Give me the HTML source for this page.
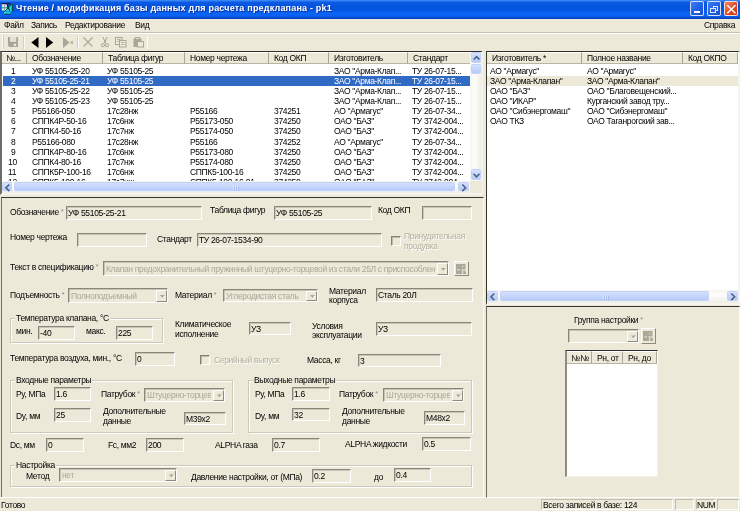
<!DOCTYPE html><html><head><meta charset="utf-8"><style>
html,body{margin:0;padding:0}
body{width:740px;height:511px;overflow:hidden;background:#ECE9D8;position:relative;font-family:"Liberation Sans",sans-serif;font-size:8.5px;color:#000}
div,svg{position:absolute}
.t{white-space:nowrap;line-height:10px;letter-spacing:-0.33px;will-change:transform}
.title{left:0;top:0;width:740px;height:19px;background:linear-gradient(#4591f8 0,#2a78f0 1px,#0b5ae6 2.5px,#0453dc 6px,#0556e0 10px,#0a64f4 13px,#0a63f3 16px,#0a4fd2 17.5px,#0940b8 19px)}
.cb{top:1px;width:14px;height:15px;box-sizing:border-box;border:1px solid rgba(255,255,255,.8);border-radius:2px;background:linear-gradient(135deg,#3c7df7,#1f5ce3 60%,#1b4fd0)}
.cl{background:linear-gradient(135deg,#ee8c6b,#e0461f 60%,#cc3a12)}
.inp{box-sizing:border-box;border-top:1px solid #8a877a;border-left:1px solid #8a877a;border-bottom:1px solid #fff;border-right:1px solid #fff;background:#ECE9D8;box-shadow:inset 1px 1px 0 #c9c6b6}
.ddb{box-sizing:border-box;background:#ECE9D8;border-top:1px solid #fff;border-left:1px solid #fff;border-right:1px solid #8e8b7c;border-bottom:1px solid #8e8b7c}
.grp{box-sizing:border-box;border:1px solid #cdc9b8;box-shadow:inset 1px 1px 0 #fff,1px 1px 0 #fff}
.chk{width:10px;height:10px;box-sizing:border-box;border-top:1px solid #858273;border-left:1px solid #858273;border-right:1px solid #fff;border-bottom:1px solid #fff;box-shadow:inset 1px 1px 0 #bdbaab}
.lv{box-sizing:border-box;background:#fff;border-top:1px solid #2e2d29;border-left:1px solid #34332e;border-right:1px solid #e0ddd0;border-bottom:1px solid #e0ddd0}
.hd{box-sizing:border-box;background:#ECE9D8;border-top:1px solid #fff;border-right:1px solid #a9a697;border-bottom:1px solid #b8b5a5;box-shadow:1px 0 0 #fff}
.sbv{background:linear-gradient(90deg,#f6f5f0,#fdfdfb 40%,#eeede6)}
.sbh{background:linear-gradient(#f6f5f0,#fdfdfb 40%,#eeede6)}
.sbtn{box-sizing:border-box;background:linear-gradient(#d4e0fd,#c3d4fb 60%,#b7cbf7);border:1px solid #c0d0f6;border-radius:1.5px}
.pnl{box-sizing:border-box;border-top:1px solid #35342f;border-left:1px solid #6f6d64;border-right:1px solid #fbfaf5;border-bottom:1px solid #fff}
.btn{box-sizing:border-box;border-top:1px solid #fff;border-left:1px solid #fff;border-right:1px solid #8e8b7c;border-bottom:1px solid #8e8b7c;background:#ECE9D8}
.sp{box-sizing:border-box;border-top:1px solid #c0bdae;border-left:1px solid #c0bdae;border-right:1px solid #fff;border-bottom:1px solid #fff}
</style></head><body>
<div class="title"></div>
<svg style="position:absolute;left:0px;top:1px" width="16" height="16" viewBox="0 0 16 16">
<rect x="1.6" y="2" width="9" height="1.3" fill="#101c40"/>
<rect x="1.8" y="3.3" width="5.2" height="6.2" fill="#eee4e2"/>
<rect x="1.8" y="5.9" width="5.2" height="1.6" fill="#1cc2bc"/>
<rect x="4.2" y="3.3" width="0.7" height="6.2" fill="#9a8f96"/>
<path d="M11.9 2.6 L11.9 10.4 L4.6 10.4 Z" fill="#1ad8c6"/>
<path d="M11.9 2.8 L5 10.2" stroke="#0a3a36" stroke-width="0.9"/>
<path d="M6.8 3.4 L9.6 9.6" stroke="#0b1830" stroke-width="1"/>
<rect x="11.9" y="2.8" width="1" height="7.8" fill="#074236"/>
<rect x="4" y="10.9" width="6.4" height="1.9" fill="#1ad8c6"/>
<rect x="4" y="12.8" width="6.4" height="0.8" fill="#0b2a40"/>
</svg>
<div class="t" style="left:16px;top:3.2px;font-size:9px;font-weight:bold;color:#fff;letter-spacing:0.19px;text-shadow:1px 1px 0 #0a2fa0">Чтение / модификация базы данных для расчета предклапана - pk1</div>
<div class="cb" style="left:690px"><div style="position:absolute;left:3px;top:9px;width:6px;height:2px;background:#fff"></div></div>
<div class="cb" style="left:707px"><div style="left:4.5px;top:3.5px;width:5.5px;height:5px;box-sizing:border-box;border:1px solid rgba(255,255,255,.85);border-top-width:1.6px"></div><div style="left:2px;top:6px;width:5.5px;height:5px;box-sizing:border-box;border:1px solid rgba(255,255,255,.85);border-top-width:1.6px;background:#2a62e2"></div></div>
<div class="cb cl" style="left:724px"><svg width="14" height="15" style="position:absolute;left:0;top:0"><path d="M2.3 3.3 L10.4 11.2 M10.4 3.3 L2.3 11.2" stroke="#fff" stroke-width="1.5"/></svg></div>
<div class="t" style="left:4px;top:20.20px;font-size:8.5px;">Файл</div>
<div class="t" style="left:31px;top:20.20px;font-size:8.5px;">Запись</div>
<div class="t" style="left:65px;top:20.20px;font-size:8.5px;">Редактирование</div>
<div class="t" style="left:135px;top:20.20px;font-size:8.5px;">Вид</div>
<div class="t" style="left:704px;top:20.20px;font-size:8.5px;">Справка</div>
<div style="left:0px;top:32px;width:740px;height:1px;background:#c5c2b2"></div>
<div style="left:0px;top:33px;width:740px;height:1px;background:#fff"></div>
<div style="left:2px;top:35px;width:1px;height:14px;background:#fbfaf6"></div>
<div style="left:3px;top:35px;width:1px;height:14px;background:#d3d0c2"></div>
<svg style="position:absolute;left:8px;top:37px" width="11" height="11"><path d="M0 0 H10 V10 H1.5 L0 8.5 Z" fill="#a9a697"/><rect x="2" y="0" width="6.2" height="4.8" fill="#e6e3d6"/><rect x="5.8" y="6.8" width="2.3" height="2.2" fill="#eeebe0"/></svg>
<div style="left:23px;top:36px;width:1px;height:13px;background:#d3d0c2"></div>
<div style="left:24px;top:36px;width:1px;height:13px;background:#fbfaf6"></div>
<svg style="position:absolute;left:31px;top:36.5px" width="24" height="12"><path d="M0.3 5.5 L7.5 0 L7.5 11 Z" fill="#000"/><path d="M15 0 L22.2 5.5 L15 11 Z" fill="#000"/></svg>
<svg style="position:absolute;left:63px;top:36.5px" width="12" height="12"><path d="M0 0 L6.5 5.5 L0 11 Z" fill="#a9a697"/><path d="M7.6 4 L10 7 M10 4 L7.6 7" stroke="#a9a697" stroke-width="1"/></svg>
<div style="left:77px;top:36px;width:1px;height:13px;background:#d3d0c2"></div>
<div style="left:78px;top:36px;width:1px;height:13px;background:#fbfaf6"></div>
<svg style="position:absolute;left:83px;top:37px" width="11" height="11"><path d="M0.5 0.5 L9.5 9.5 M9.5 0.5 L0.5 9.5" stroke="#aaa796" stroke-width="1.1"/></svg>
<svg style="position:absolute;left:101px;top:37px" width="8" height="11"><path d="M1.8 0 L4.8 6.2 M6.2 0 L3.2 6.2" stroke="#aaa796" stroke-width="1"/><circle cx="2" cy="8.2" r="1.6" fill="none" stroke="#aaa796" stroke-width="1"/><circle cx="6" cy="8.2" r="1.6" fill="none" stroke="#aaa796" stroke-width="1"/></svg>
<svg style="position:absolute;left:115px;top:37px" width="12" height="11"><rect x="0.5" y="0.5" width="6.5" height="7" fill="#ece9dc" stroke="#aaa796"/><rect x="4.5" y="3.5" width="6.5" height="6.5" fill="#ece9dc" stroke="#aaa796"/><path d="M2 2.5 H5.5 M2 4.5 H4 M6 5.5 H9.5 M6 7.5 H9.5" stroke="#aaa796" stroke-width="0.8"/></svg>
<svg style="position:absolute;left:133px;top:37px" width="11" height="11"><rect x="0.5" y="1.5" width="8" height="8.5" fill="#aaa796"/><rect x="2.5" y="0.5" width="4" height="2.2" fill="#e2dfd2" stroke="#aaa796"/><rect x="4.5" y="4.5" width="6" height="5.5" fill="#ece9dc" stroke="#aaa796"/></svg>
<div style="left:147px;top:36px;width:1px;height:13px;background:#fff"></div>
<div class="lv" style="left:0px;top:51px;width:483px;height:144px;border-left-width:2px;border-left-color:#6d6b63;border-right:2px solid #f4f3ee;border-bottom:2px solid #f4f3ee"></div>
<div class="hd" style="left:2px;top:52px;width:25px;height:12px"></div>
<div class="t" style="left:6px;top:53.00px;font-size:8.5px;">№...</div>
<div class="hd" style="left:27px;top:52px;width:76px;height:12px"></div>
<div class="t" style="left:31.5px;top:53.00px;font-size:8.5px;">Обозначение</div>
<div class="hd" style="left:103px;top:52px;width:82px;height:12px"></div>
<div class="t" style="left:107.5px;top:53.00px;font-size:8.5px;">Таблица фигур</div>
<div class="hd" style="left:185px;top:52px;width:84px;height:12px"></div>
<div class="t" style="left:189.5px;top:53.00px;font-size:8.5px;">Номер чертежа</div>
<div class="hd" style="left:269px;top:52px;width:60px;height:12px"></div>
<div class="t" style="left:273.5px;top:53.00px;font-size:8.5px;">Код ОКП</div>
<div class="hd" style="left:329px;top:52px;width:79px;height:12px"></div>
<div class="t" style="left:333.5px;top:53.00px;font-size:8.5px;">Изготовитель</div>
<div class="hd" style="left:408px;top:52px;width:63px;height:12px"></div>
<div class="t" style="left:412.5px;top:53.00px;font-size:8.5px;">Стандарт</div>
<div style="left:2px;top:64px;width:469px;height:118px;overflow:hidden">
<div class="t" style="left:9px;top:1.50px;">1</div>
<div class="t" style="left:29.8px;top:1.50px;">УФ 55105-25-20</div>
<div class="t" style="left:105.4px;top:1.50px;">УФ 55105-25</div>
<div class="t" style="left:331.8px;top:1.50px;">ЗАО "Арма-Клап...</div>
<div class="t" style="left:410.4px;top:1.50px;">ТУ 26-07-15...</div>
<div style="left:1px;top:11.76px;width:467px;height:10px;background:#316ac5"></div>
<div class="t" style="left:9px;top:11.66px;color:#fff">2</div>
<div class="t" style="left:29.8px;top:11.66px;color:#fff">УФ 55105-25-21</div>
<div class="t" style="left:105.4px;top:11.66px;color:#fff">УФ 55105-25</div>
<div class="t" style="left:331.8px;top:11.66px;color:#fff">ЗАО "Арма-Клап...</div>
<div class="t" style="left:410.4px;top:11.66px;color:#fff">ТУ 26-07-15...</div>
<div class="t" style="left:9px;top:21.82px;">3</div>
<div class="t" style="left:29.8px;top:21.82px;">УФ 55105-25-22</div>
<div class="t" style="left:105.4px;top:21.82px;">УФ 55105-25</div>
<div class="t" style="left:331.8px;top:21.82px;">ЗАО "Арма-Клап...</div>
<div class="t" style="left:410.4px;top:21.82px;">ТУ 26-07-15...</div>
<div class="t" style="left:9px;top:31.98px;">4</div>
<div class="t" style="left:29.8px;top:31.98px;">УФ 55105-25-23</div>
<div class="t" style="left:105.4px;top:31.98px;">УФ 55105-25</div>
<div class="t" style="left:331.8px;top:31.98px;">ЗАО "Арма-Клап...</div>
<div class="t" style="left:410.4px;top:31.98px;">ТУ 26-07-15...</div>
<div class="t" style="left:9px;top:42.14px;">5</div>
<div class="t" style="left:29.8px;top:42.14px;">P55166-050</div>
<div class="t" style="left:105.4px;top:42.14px;">17с28нж</div>
<div class="t" style="left:187.7px;top:42.14px;">P55166</div>
<div class="t" style="left:271.7px;top:42.14px;">374251</div>
<div class="t" style="left:331.8px;top:42.14px;">АО "Армагус"</div>
<div class="t" style="left:410.4px;top:42.14px;">ТУ 26-07-34...</div>
<div class="t" style="left:9px;top:52.30px;">6</div>
<div class="t" style="left:29.8px;top:52.30px;">СППК4Р-50-16</div>
<div class="t" style="left:105.4px;top:52.30px;">17с6нж</div>
<div class="t" style="left:187.7px;top:52.30px;">P55173-050</div>
<div class="t" style="left:271.7px;top:52.30px;">374250</div>
<div class="t" style="left:331.8px;top:52.30px;">ОАО "БАЗ"</div>
<div class="t" style="left:410.4px;top:52.30px;">ТУ 3742-004...</div>
<div class="t" style="left:9px;top:62.46px;">7</div>
<div class="t" style="left:29.8px;top:62.46px;">СППК4-50-16</div>
<div class="t" style="left:105.4px;top:62.46px;">17с7нж</div>
<div class="t" style="left:187.7px;top:62.46px;">P55174-050</div>
<div class="t" style="left:271.7px;top:62.46px;">374250</div>
<div class="t" style="left:331.8px;top:62.46px;">ОАО "БАЗ"</div>
<div class="t" style="left:410.4px;top:62.46px;">ТУ 3742-004...</div>
<div class="t" style="left:9px;top:72.62px;">8</div>
<div class="t" style="left:29.8px;top:72.62px;">P55166-080</div>
<div class="t" style="left:105.4px;top:72.62px;">17с28нж</div>
<div class="t" style="left:187.7px;top:72.62px;">P55166</div>
<div class="t" style="left:271.7px;top:72.62px;">374252</div>
<div class="t" style="left:331.8px;top:72.62px;">АО "Армагус"</div>
<div class="t" style="left:410.4px;top:72.62px;">ТУ 26-07-34...</div>
<div class="t" style="left:9px;top:82.78px;">9</div>
<div class="t" style="left:29.8px;top:82.78px;">СППК4Р-80-16</div>
<div class="t" style="left:105.4px;top:82.78px;">17с6нж</div>
<div class="t" style="left:187.7px;top:82.78px;">P55173-080</div>
<div class="t" style="left:271.7px;top:82.78px;">374250</div>
<div class="t" style="left:331.8px;top:82.78px;">ОАО "БАЗ"</div>
<div class="t" style="left:410.4px;top:82.78px;">ТУ 3742-004...</div>
<div class="t" style="left:5.5px;top:92.94px;">10</div>
<div class="t" style="left:29.8px;top:92.94px;">СППК4-80-16</div>
<div class="t" style="left:105.4px;top:92.94px;">17с7нж</div>
<div class="t" style="left:187.7px;top:92.94px;">P55174-080</div>
<div class="t" style="left:271.7px;top:92.94px;">374250</div>
<div class="t" style="left:331.8px;top:92.94px;">ОАО "БАЗ"</div>
<div class="t" style="left:410.4px;top:92.94px;">ТУ 3742-004...</div>
<div class="t" style="left:5.5px;top:103.10px;">11</div>
<div class="t" style="left:29.8px;top:103.10px;">СППК5Р-100-16</div>
<div class="t" style="left:105.4px;top:103.10px;">17с6нж</div>
<div class="t" style="left:187.7px;top:103.10px;">СППК5-100-16</div>
<div class="t" style="left:271.7px;top:103.10px;">374250</div>
<div class="t" style="left:331.8px;top:103.10px;">ОАО "БАЗ"</div>
<div class="t" style="left:410.4px;top:103.10px;">ТУ 3742-004...</div>
<div class="t" style="left:5.5px;top:113.26px;">12</div>
<div class="t" style="left:29.8px;top:113.26px;">СППК5-100-16</div>
<div class="t" style="left:105.4px;top:113.26px;">17с7нж</div>
<div class="t" style="left:187.7px;top:113.26px;">СППК5-100-16-01</div>
<div class="t" style="left:271.7px;top:113.26px;">374250</div>
<div class="t" style="left:331.8px;top:113.26px;">ОАО "БАЗ"</div>
<div class="t" style="left:410.4px;top:113.26px;">ТУ 3742-004...</div>
</div>
<div class="sbv" style="left:470px;top:52px;width:12px;height:130px"></div>
<div class="sbtn" style="left:471px;top:52px;width:10px;height:11px"><svg width="10" height="11"><path d="M1.7 6.5 L4.6 3.6 L7.5 6.5" stroke="#4d6185" stroke-width="1.6" fill="none"/></svg></div>
<div class="sbtn" style="left:471px;top:64px;width:10px;height:10px"></div>
<div class="sbtn" style="left:471px;top:169px;width:10px;height:11px"><svg width="10" height="11"><path d="M1.5 3.8 L4.5 6.8 L7.5 3.8" stroke="#4d6185" stroke-width="1.6" fill="none"/></svg></div>
<div class="sbh" style="left:2px;top:181px;width:469px;height:12px"></div>
<div class="sbtn" style="left:2px;top:182px;width:10px;height:9px;box-shadow:0 1px 0 #e6ecfb"><svg width="10" height="10"><path d="M6.3 1.5 L3 4.8 L6.3 8.1" stroke="#4d6185" stroke-width="1.6" fill="none"/></svg></div>
<div class="sbtn" style="left:14px;top:182px;width:441px;height:9px;box-shadow:0 1px 0 #e6ecfb"><svg width="441" height="10"><path d="M218.5 3 V7 M220.5 3 V7 M222.5 3 V7" stroke="#eef3fe" stroke-width="0.8"/><path d="M219.3 3.5 V7.5 M221.3 3.5 V7.5 M223.3 3.5 V7.5" stroke="#8faae6" stroke-width="0.6"/></svg></div>
<div class="sbtn" style="left:458px;top:182px;width:11px;height:9px;box-shadow:0 1px 0 #e6ecfb"><svg width="10" height="10"><path d="M3.3 1.5 L6.6 4.8 L3.3 8.1" stroke="#4d6185" stroke-width="1.6" fill="none"/></svg></div>
<div style="left:470px;top:181px;width:12px;height:12px;background:#ECE9D8"></div>
<div class="lv" style="left:486px;top:51px;width:254px;height:254px;border-right:2px solid #f4f3ee;border-bottom:2px solid #f4f3ee"></div>
<div class="hd" style="left:487px;top:52px;width:95px;height:12px"></div>
<div class="t" style="left:491.5px;top:53.00px;font-size:8.5px;">Изготовитель *</div>
<div class="hd" style="left:582px;top:52px;width:101px;height:12px"></div>
<div class="t" style="left:586.5px;top:53.00px;font-size:8.5px;">Полное название</div>
<div class="hd" style="left:683px;top:52px;width:55px;height:12px"></div>
<div class="t" style="left:687.5px;top:53.00px;font-size:8.5px;">Код ОКПО</div>
<div class="t" style="left:489.8px;top:65.70px;font-size:8.5px;">АО "Армагус"</div>
<div class="t" style="left:586.5px;top:65.70px;font-size:8.5px;">АО "Армагус"</div>
<div style="left:487px;top:76px;width:251px;height:10px;background:#ECE9D8"></div>
<div class="t" style="left:489.8px;top:75.70px;font-size:8.5px;">ЗАО "Арма-Клапан"</div>
<div class="t" style="left:586.5px;top:75.70px;font-size:8.5px;">ЗАО "Арма-Клапан"</div>
<div class="t" style="left:489.8px;top:85.70px;font-size:8.5px;">ОАО "БАЗ"</div>
<div class="t" style="left:586.5px;top:85.70px;font-size:8.5px;">ОАО "Благовещенский...</div>
<div class="t" style="left:489.8px;top:95.70px;font-size:8.5px;">ОАО "ИКАР"</div>
<div class="t" style="left:586.5px;top:95.70px;font-size:8.5px;">Курганский завод тру...</div>
<div class="t" style="left:489.8px;top:105.70px;font-size:8.5px;">ОАО "Сибэнергомаш"</div>
<div class="t" style="left:586.5px;top:105.70px;font-size:8.5px;">ОАО "Сибэнергомаш"</div>
<div class="t" style="left:489.8px;top:115.70px;font-size:8.5px;">ОАО ТКЗ</div>
<div class="t" style="left:586.5px;top:115.70px;font-size:8.5px;">ОАО Таганрогский зав...</div>
<div class="sbh" style="left:487px;top:290px;width:251px;height:13px"></div>
<div class="sbtn" style="left:487px;top:291px;width:11px;height:10px"><svg width="10" height="10"><path d="M6.3 1.5 L3 4.8 L6.3 8.1" stroke="#4d6185" stroke-width="1.6" fill="none"/></svg></div>
<div class="sbtn" style="left:500px;top:291px;width:209px;height:10px"><svg width="209" height="10"><path d="M102.5 3 V7 M104.5 3 V7 M106.5 3 V7" stroke="#eef3fe" stroke-width="0.8"/><path d="M103.3 3.5 V7.5 M105.3 3.5 V7.5 M107.3 3.5 V7.5" stroke="#8faae6" stroke-width="0.6"/></svg></div>
<div class="sbtn" style="left:727px;top:291px;width:11px;height:10px"><svg width="10" height="10"><path d="M3.3 1.5 L6.6 4.8 L3.3 8.1" stroke="#4d6185" stroke-width="1.6" fill="none"/></svg></div>
<div class="pnl" style="left:1px;top:197px;width:483px;height:301px"></div>
<div class="t" style="left:10px;top:207.10px;font-size:8.5px;">Обозначение <span style="color:#858585;font-size:7px;vertical-align:1px">*</span></div>
<div class="inp" style="left:66px;top:206px;width:136px;height:14px"></div>
<div class="t" style="left:68px;top:208.20px;font-size:8.5px;">УФ 55105-25-21</div>
<div class="t" style="left:210px;top:205.40px;font-size:8.5px;">Таблица фигур</div>
<div class="inp" style="left:274px;top:206px;width:98px;height:14px"></div>
<div class="t" style="left:276px;top:208.20px;font-size:8.5px;">УФ 55105-25</div>
<div class="t" style="left:378px;top:205.40px;font-size:8.5px;">Код ОКП</div>
<div class="inp" style="left:422px;top:206px;width:50px;height:14px"></div>
<div class="t" style="left:10px;top:232.30px;font-size:8.5px;">Номер чертежа</div>
<div class="inp" style="left:77px;top:233px;width:70px;height:14px"></div>
<div class="t" style="left:157px;top:233.50px;font-size:8.5px;">Стандарт</div>
<div class="inp" style="left:197px;top:233px;width:185px;height:14px"></div>
<div class="t" style="left:199px;top:235.20px;font-size:8.5px;">ТУ 26-07-1534-90</div>
<div class="chk" style="left:391px;top:236px"></div>
<div class="t" style="left:404px;top:230.80px;font-size:8.5px;color:#b3b0a1;text-shadow:0.7px 0.7px 0 #fff">Принудительная</div>
<div class="t" style="left:404px;top:240.60px;font-size:8.5px;color:#b3b0a1;text-shadow:0.7px 0.7px 0 #fff">продувка</div>
<div class="t" style="left:10px;top:261.70px;font-size:8.5px;">Текст в спецификацию <span style="color:#858585;font-size:7px;vertical-align:1px">*</span></div>
<div class="inp" style="left:103px;top:261px;width:346px;height:15px;box-shadow:inset 0.5px 0.5px 0 #a3a092"></div>
<div class="t" style="left:106px;top:263.70px;width:329px;overflow:hidden;color:#aca899">Клапан предохранительный пружинный штуцерно-торцевой из стали 25Л с приспособлен</div>
<div class="ddb" style="left:437px;top:263px;width:11px;height:12px"><svg width="11" height="12" style="left:-1px;top:-1px"><path d="M4 5.0 h5 l-2.5 3 z" fill="#fff" transform="translate(0.8,0.8)"/><path d="M4 5.0 h5 l-2.5 3 z" fill="#aca899"/></svg></div>
<div class="btn" style="left:454px;top:261px;width:15px;height:15px"><svg width="15" height="15" style="left:-1px;top:-1px"><rect x="2" y="3" width="10" height="10" fill="#aca897"/><path d="M3.3 8.9 H6 M7.4 8.9 H12 M8.7 9 V13 M8.7 4.8 V6.4 M12 3 V11" stroke="#f4f2ea" stroke-width="0.9" fill="none"/></svg></div>
<div class="t" style="left:10px;top:289.70px;font-size:8.5px;">Подъемность <span style="color:#858585;font-size:7px;vertical-align:1px">*</span></div>
<div class="inp" style="left:68px;top:288px;width:100px;height:15px;box-shadow:inset 0.5px 0.5px 0 #a3a092"></div>
<div class="t" style="left:71px;top:290.70px;width:83px;overflow:hidden;color:#aca899">Полноподъемный</div>
<div class="ddb" style="left:156px;top:290px;width:11px;height:12px"><svg width="11" height="12" style="left:-1px;top:-1px"><path d="M4 5.0 h5 l-2.5 3 z" fill="#fff" transform="translate(0.8,0.8)"/><path d="M4 5.0 h5 l-2.5 3 z" fill="#aca899"/></svg></div>
<div class="t" style="left:175px;top:289.70px;font-size:8.5px;">Материал <span style="color:#858585;font-size:7px;vertical-align:1px">*</span></div>
<div class="inp" style="left:223px;top:289px;width:95px;height:13px;box-shadow:inset 0.5px 0.5px 0 #a3a092"></div>
<div class="t" style="left:226px;top:290.70px;width:78px;overflow:hidden;color:#aca899">Углеродистая сталь</div>
<div class="ddb" style="left:306px;top:291px;width:11px;height:10px"><svg width="11" height="10" style="left:-1px;top:-1px"><path d="M4 4.0 h5 l-2.5 3 z" fill="#fff" transform="translate(0.8,0.8)"/><path d="M4 4.0 h5 l-2.5 3 z" fill="#aca899"/></svg></div>
<div class="t" style="left:329px;top:285.65px;font-size:8.5px;">Материал</div>
<div class="t" style="left:329px;top:295.45px;font-size:8.5px;">корпуса</div>
<div class="inp" style="left:376px;top:288px;width:97px;height:14px"></div>
<div class="t" style="left:378px;top:290.20px;font-size:8.5px;">Сталь 20Л</div>
<div class="grp" style="left:10px;top:318px;width:153px;height:25px"></div>
<div class="t" style="left:15px;top:312.70px;padding:0 1px;background:#ECE9D8">Температура клапана, °C</div>
<div class="t" style="left:16px;top:325.50px;font-size:8.5px;">мин.</div>
<div class="inp" style="left:38px;top:326px;width:37px;height:14px"></div>
<div class="t" style="left:40px;top:328.20px;font-size:8.5px;">-40</div>
<div class="t" style="left:86.4px;top:325.50px;font-size:8.5px;">макс.</div>
<div class="inp" style="left:116px;top:326px;width:37px;height:14px"></div>
<div class="t" style="left:118px;top:328.20px;font-size:8.5px;">225</div>
<div class="t" style="left:175px;top:319.30px;font-size:8.5px;">Климатическое</div>
<div class="t" style="left:175px;top:329.10px;font-size:8.5px;">исполнение</div>
<div class="inp" style="left:249px;top:322px;width:42px;height:13px"></div>
<div class="t" style="left:251px;top:323.70px;font-size:8.5px;">УЗ</div>
<div class="t" style="left:311.7px;top:320.65px;font-size:8.5px;">Условия</div>
<div class="t" style="left:311.7px;top:330.45px;font-size:8.5px;">эксплуатации</div>
<div class="inp" style="left:376px;top:322px;width:96px;height:14px"></div>
<div class="t" style="left:378px;top:324.20px;font-size:8.5px;">УЗ</div>
<div class="t" style="left:10px;top:352.70px;font-size:8.5px;">Температура воздуха, мин., °C</div>
<div class="inp" style="left:135px;top:352px;width:40px;height:14px"></div>
<div class="t" style="left:137px;top:354.20px;font-size:8.5px;">0</div>
<div class="chk" style="left:200px;top:355px"></div>
<div class="t" style="left:213.5px;top:354.70px;font-size:8.5px;color:#b3b0a1;text-shadow:0.7px 0.7px 0 #fff">Серийный выпуск</div>
<div class="t" style="left:306.8px;top:355.00px;font-size:8.5px;">Масса, кг</div>
<div class="inp" style="left:358px;top:354px;width:83px;height:13px"></div>
<div class="t" style="left:360px;top:355.70px;font-size:8.5px;">3</div>
<div class="grp" style="left:10px;top:380px;width:223px;height:53px"></div>
<div class="t" style="left:15px;top:374.70px;padding:0 1px;background:#ECE9D8">Входные параметры</div>
<div class="t" style="left:15.8px;top:388.70px;font-size:8.5px;">Ру, МПа</div>
<div class="inp" style="left:54px;top:387px;width:37px;height:14px"></div>
<div class="t" style="left:56px;top:389.20px;font-size:8.5px;">1.6</div>
<div class="t" style="left:101px;top:388.70px;font-size:8.5px;">Патрубок <span style="color:#858585;font-size:7px;vertical-align:1px">*</span></div>
<div class="inp" style="left:144px;top:388px;width:81px;height:14px;box-shadow:inset 0.5px 0.5px 0 #a3a092"></div>
<div class="t" style="left:147px;top:390.20px;width:64px;overflow:hidden;color:#aca899">Штуцерно-торцевой</div>
<div class="ddb" style="left:213px;top:390px;width:11px;height:11px"><svg width="11" height="11" style="left:-1px;top:-1px"><path d="M4 4.5 h5 l-2.5 3 z" fill="#fff" transform="translate(0.8,0.8)"/><path d="M4 4.5 h5 l-2.5 3 z" fill="#aca899"/></svg></div>
<div class="t" style="left:15.8px;top:411.30px;font-size:8.5px;">Dy, мм</div>
<div class="inp" style="left:54px;top:408px;width:37px;height:14px"></div>
<div class="t" style="left:56px;top:410.20px;font-size:8.5px;">25</div>
<div class="t" style="left:102.6px;top:405.85px;font-size:8.5px;">Дополнительные</div>
<div class="t" style="left:102.6px;top:415.65px;font-size:8.5px;">данные</div>
<div class="inp" style="left:184px;top:412px;width:42px;height:13px"></div>
<div class="t" style="left:186px;top:413.70px;font-size:8.5px;">М39x2</div>
<div class="grp" style="left:248px;top:380px;width:224px;height:53px"></div>
<div class="t" style="left:253px;top:374.70px;padding:0 1px;background:#ECE9D8">Выходные параметры</div>
<div class="t" style="left:254.5px;top:389.00px;font-size:8.5px;">Ру, МПа</div>
<div class="inp" style="left:292px;top:387px;width:38px;height:14px"></div>
<div class="t" style="left:294px;top:389.20px;font-size:8.5px;">1.6</div>
<div class="t" style="left:339px;top:389.00px;font-size:8.5px;">Патрубок <span style="color:#858585;font-size:7px;vertical-align:1px">*</span></div>
<div class="inp" style="left:383px;top:388px;width:81px;height:14px;box-shadow:inset 0.5px 0.5px 0 #a3a092"></div>
<div class="t" style="left:386px;top:390.20px;width:64px;overflow:hidden;color:#aca899">Штуцерно-торцевой</div>
<div class="ddb" style="left:452px;top:390px;width:11px;height:11px"><svg width="11" height="11" style="left:-1px;top:-1px"><path d="M4 4.5 h5 l-2.5 3 z" fill="#fff" transform="translate(0.8,0.8)"/><path d="M4 4.5 h5 l-2.5 3 z" fill="#aca899"/></svg></div>
<div class="t" style="left:254.5px;top:410.90px;font-size:8.5px;">Dy, мм</div>
<div class="inp" style="left:292px;top:408px;width:38px;height:13px"></div>
<div class="t" style="left:294px;top:409.70px;font-size:8.5px;">32</div>
<div class="t" style="left:341.6px;top:405.85px;font-size:8.5px;">Дополнительные</div>
<div class="t" style="left:341.6px;top:415.65px;font-size:8.5px;">данные</div>
<div class="inp" style="left:424px;top:411px;width:41px;height:14px"></div>
<div class="t" style="left:426px;top:413.20px;font-size:8.5px;">М48x2</div>
<div class="t" style="left:9.5px;top:439.60px;font-size:8.5px;">Dc, мм</div>
<div class="inp" style="left:46px;top:438px;width:38px;height:14px"></div>
<div class="t" style="left:48px;top:440.20px;font-size:8.5px;">0</div>
<div class="t" style="left:107.6px;top:439.60px;font-size:8.5px;">Fc, мм2</div>
<div class="inp" style="left:146px;top:438px;width:38px;height:14px"></div>
<div class="t" style="left:148px;top:440.20px;font-size:8.5px;">200</div>
<div class="t" style="left:215px;top:440.10px;font-size:8.5px;">ALPHA газа</div>
<div class="inp" style="left:272px;top:438px;width:48px;height:14px"></div>
<div class="t" style="left:274px;top:440.20px;font-size:8.5px;">0.7</div>
<div class="t" style="left:345px;top:439.00px;font-size:8.5px;">ALPHA жидкости</div>
<div class="inp" style="left:422px;top:437px;width:49px;height:14px"></div>
<div class="t" style="left:424px;top:439.20px;font-size:8.5px;">0.5</div>
<div class="grp" style="left:10px;top:465px;width:462px;height:22px"></div>
<div class="t" style="left:15px;top:459.70px;padding:0 1px;background:#ECE9D8">Настройка</div>
<div class="t" style="left:25.7px;top:471.20px;font-size:8.5px;">Метод</div>
<div class="inp" style="left:59px;top:468px;width:118px;height:14px;box-shadow:inset 0.5px 0.5px 0 #a3a092"></div>
<div class="t" style="left:62px;top:470.20px;width:101px;overflow:hidden;color:#aca899">нет</div>
<div class="ddb" style="left:165px;top:470px;width:11px;height:11px"><svg width="11" height="11" style="left:-1px;top:-1px"><path d="M4 4.5 h5 l-2.5 3 z" fill="#fff" transform="translate(0.8,0.8)"/><path d="M4 4.5 h5 l-2.5 3 z" fill="#aca899"/></svg></div>
<div class="t" style="left:190.5px;top:471.70px;font-size:8.5px;">Давление настройки, от (МПа)</div>
<div class="inp" style="left:312px;top:469px;width:39px;height:14px"></div>
<div class="t" style="left:314px;top:471.20px;font-size:8.5px;">0.2</div>
<div class="t" style="left:374px;top:471.70px;font-size:8.5px;">до</div>
<div class="inp" style="left:394px;top:468px;width:37px;height:14px"></div>
<div class="t" style="left:396px;top:470.20px;font-size:8.5px;">0.4</div>
<div class="pnl" style="left:486px;top:306px;width:254px;height:192px"></div>
<div class="t" style="left:573.5px;top:315.00px;font-size:8.5px;">Группа настройки <span style="color:#858585;font-size:7px;vertical-align:1px">*</span></div>
<div class="inp" style="left:568px;top:329px;width:71px;height:14px;box-shadow:inset 0.5px 0.5px 0 #a3a092"></div>
<div class="ddb" style="left:627px;top:331px;width:11px;height:11px"><svg width="11" height="11" style="left:-1px;top:-1px"><path d="M4 4.5 h5 l-2.5 3 z" fill="#fff" transform="translate(0.8,0.8)"/><path d="M4 4.5 h5 l-2.5 3 z" fill="#aca899"/></svg></div>
<div class="btn" style="left:641px;top:328px;width:15px;height:16px"><svg width="15" height="16" style="left:-1px;top:-1px"><rect x="2" y="3" width="10" height="10" fill="#aca897"/><path d="M3.3 8.9 H6 M7.4 8.9 H12 M8.7 9 V13 M8.7 4.8 V6.4 M12 3 V11" stroke="#f4f2ea" stroke-width="0.9" fill="none"/></svg></div>
<div class="lv" style="left:565px;top:350px;width:93px;height:127px;border-left:2px solid #8f8c7f;border-right:1px solid #f2f1ea;border-bottom:1px solid #f2f1ea"></div>
<div class="hd" style="left:567px;top:351px;width:25px;height:13px"></div>
<div class="t" style="left:571px;top:352.90px;font-size:8.5px;letter-spacing:-0.2px">№№</div>
<div class="hd" style="left:592px;top:351px;width:31px;height:13px"></div>
<div class="t" style="left:597.3px;top:352.90px;font-size:8.5px;">Рн, от</div>
<div class="hd" style="left:623px;top:351px;width:34px;height:13px"></div>
<div class="t" style="left:628.3px;top:352.90px;font-size:8.5px;">Рн, до</div>
<div style="left:0px;top:497px;width:486px;height:1px;background:#fff"></div>
<div class="t" style="left:1px;top:499.70px;font-size:8.5px;">Готово</div>
<div class="sp" style="left:541px;top:499px;width:132px;height:11px"></div>
<div class="sp" style="left:675px;top:499px;width:19px;height:11px"></div>
<div class="sp" style="left:696px;top:499px;width:19px;height:11px"></div>
<div class="sp" style="left:717px;top:499px;width:22px;height:11px"></div>
<div class="t" style="left:543px;top:499.60px;font-size:8.5px;">Всего записей в базе: 124</div>
<div class="t" style="left:697px;top:499.60px;font-size:8.5px;">NUM</div>
</body></html>
